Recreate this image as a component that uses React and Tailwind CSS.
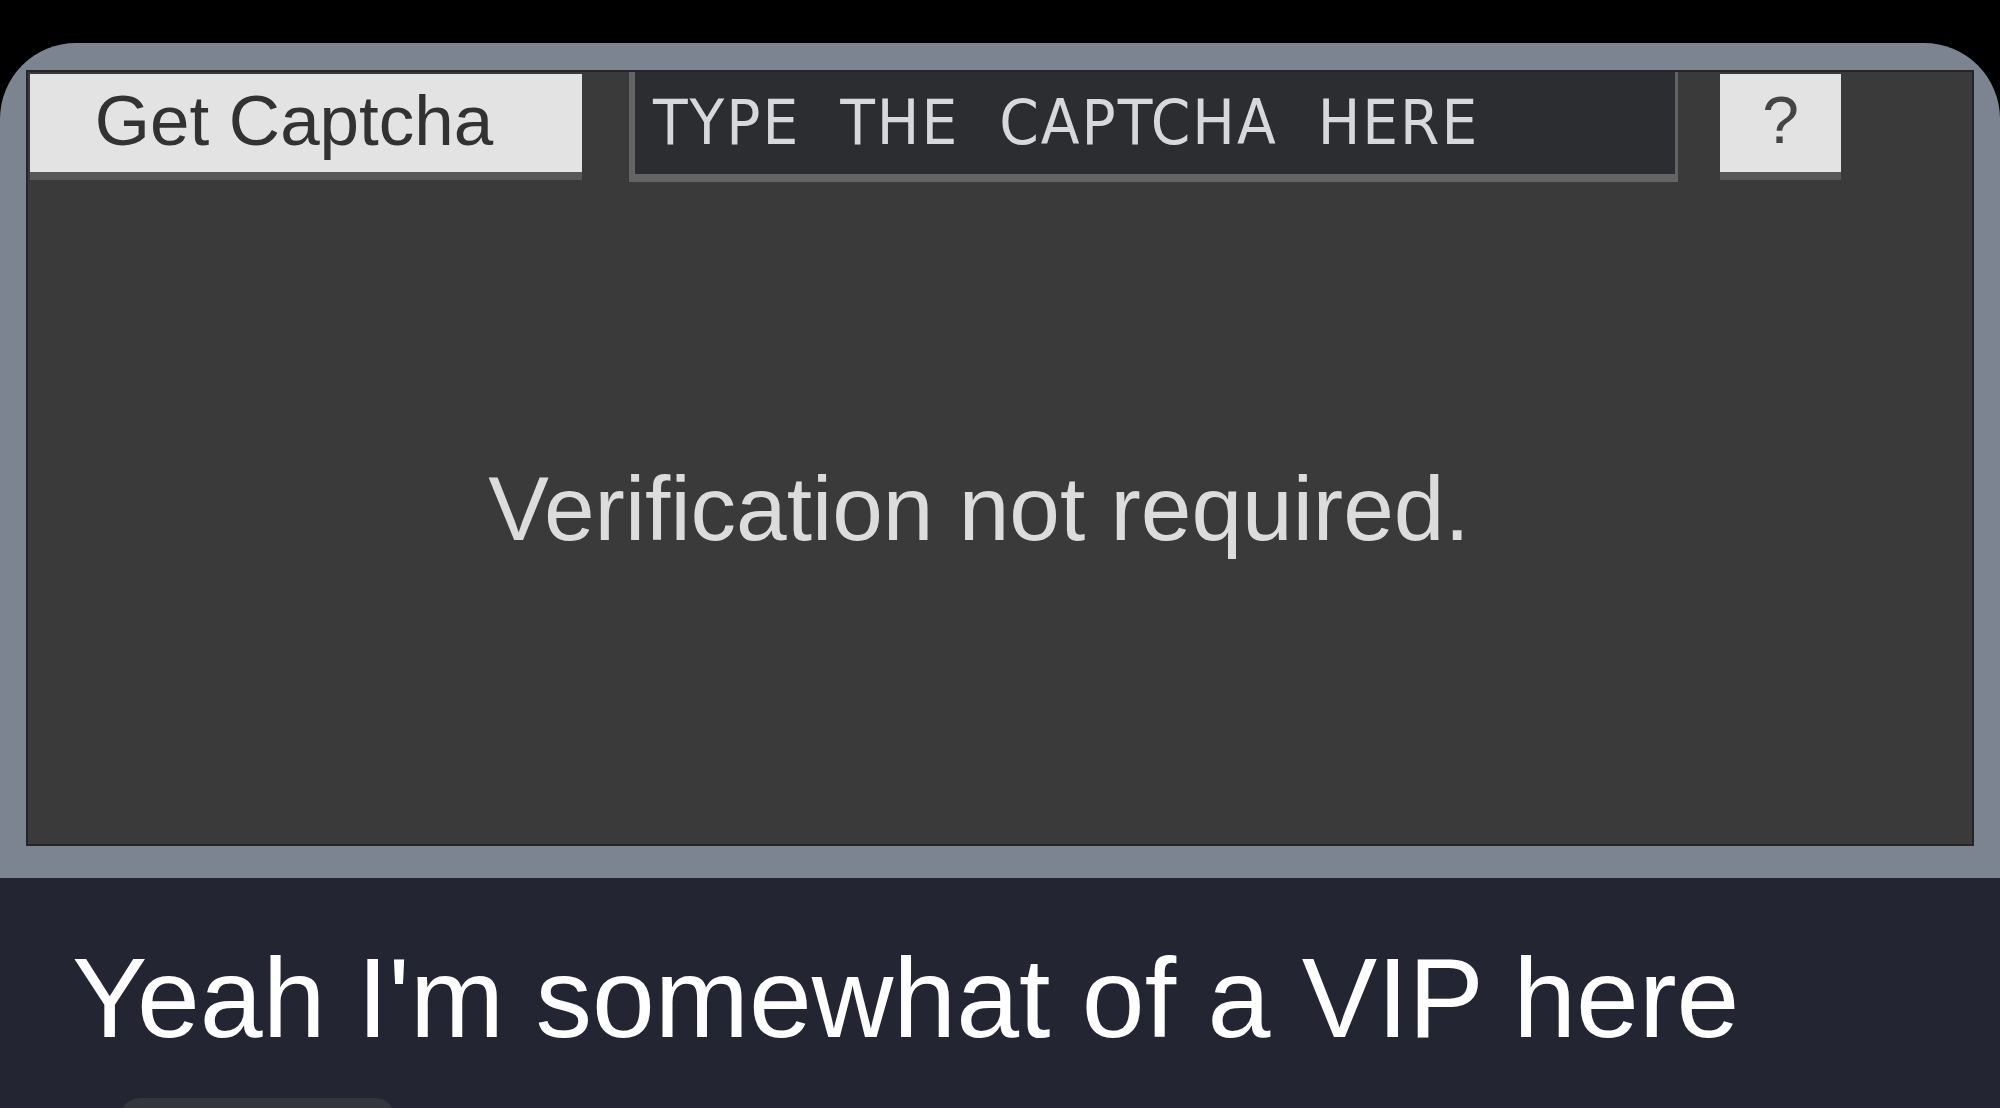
import React from 'react';

const sans = { fontFamily: '"Liberation Sans", Arial, Helvetica, sans-serif' };

function CaptchaBar() {
  return (
    <div className="flex items-start pl-[2px] pt-0">
      <button
        className="mt-[2px] w-[552px] h-[106px] bg-[#e3e3e3] border-b-[8px] border-[#575757] flex items-center justify-center pr-[24px] pb-[6px] text-[71px] text-[#323232] leading-none"
        style={sans}
      >
        Get Captcha
      </button>
      <div className="ml-[47px] w-[1049px] h-[110px] bg-[#2c2d31] border-l-[6px] border-b-[8px] border-r-[3px] border-[#646464] flex items-center pl-[18px] pb-[2px]">
        <span
          className="text-[63px] leading-none text-[#d8d8da] tracking-[2px] [word-spacing:20px]"
          style={{ fontFamily: '"DejaVu Sans Condensed", "Liberation Sans Narrow", "DejaVu Sans", sans-serif' }}
        >
          TYPE THE CAPTCHA HERE
        </span>
      </div>
      <button
        className="mt-[2px] ml-[42px] w-[121px] h-[106px] bg-[#e3e3e3] border-b-[8px] border-[#575757] flex items-center justify-center pb-[6px] text-[66px] text-[#454545] leading-none"
        style={sans}
      >
        ?
      </button>
    </div>
  );
}

export default function App() {
  return (
    <div className="w-full h-[1108px] bg-black flex flex-col overflow-hidden">
      <div className="h-[43px] shrink-0" />

      {/* grey window frame */}
      <div className="h-[835px] shrink-0 bg-[#7b8490] rounded-t-[76px] pl-[26px] pr-[26px] pt-[27px] pb-[32px]">
        <div className="h-full bg-[#3a3a3a] border-[2px] border-[#262626] flex flex-col">
          <CaptchaBar />
          <div className="flex-1 flex items-center justify-center pr-[42px] pb-[10px]">
            <p className="text-[91px] leading-none text-[#dcdcdc]" style={sans}>
              Verification not required.
            </p>
          </div>
        </div>
      </div>

      {/* caption */}
      <div className="flex-1 bg-[#232533] pl-[72px] pt-[64px]">
        <p className="text-[113px] leading-none text-white" style={sans}>
          Yeah I'm somewhat of a VIP here
        </p>
        <div className="mt-[43px] ml-[48px] w-[275px] h-[40px] rounded-full bg-[#34353f]" />
      </div>
    </div>
  );
}
